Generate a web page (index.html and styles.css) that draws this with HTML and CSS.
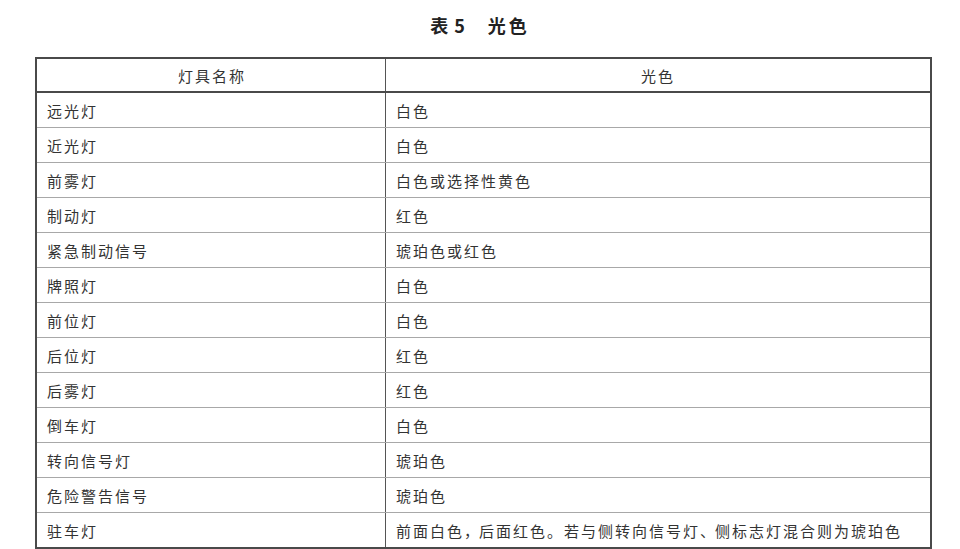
FILE: index.html
```html
<!DOCTYPE html>
<html lang="zh">
<head>
<meta charset="utf-8">
<link rel="stylesheet" href="styles.css">
</head>
<body>
<div class="title"><span class="t-num">表 5</span><span class="t-name">光色</span></div>
<div class="table">
  <div class="row head"><div class="cell c1">灯具名称</div><div class="cell c2">光色</div></div>
  <div class="row"><div class="cell c1">远光灯</div><div class="cell c2">白色</div></div>
  <div class="row"><div class="cell c1">近光灯</div><div class="cell c2">白色</div></div>
  <div class="row"><div class="cell c1">前雾灯</div><div class="cell c2">白色或选择性黄色</div></div>
  <div class="row"><div class="cell c1">制动灯</div><div class="cell c2">红色</div></div>
  <div class="row"><div class="cell c1">紧急制动信号</div><div class="cell c2">琥珀色或红色</div></div>
  <div class="row"><div class="cell c1">牌照灯</div><div class="cell c2">白色</div></div>
  <div class="row"><div class="cell c1">前位灯</div><div class="cell c2">白色</div></div>
  <div class="row"><div class="cell c1">后位灯</div><div class="cell c2">红色</div></div>
  <div class="row"><div class="cell c1">后雾灯</div><div class="cell c2">红色</div></div>
  <div class="row"><div class="cell c1">倒车灯</div><div class="cell c2">白色</div></div>
  <div class="row"><div class="cell c1">转向信号灯</div><div class="cell c2">琥珀色</div></div>
  <div class="row"><div class="cell c1">危险警告信号</div><div class="cell c2">琥珀色</div></div>
  <div class="row last"><div class="cell c1">驻车灯</div><div class="cell c2">前面白色<span class="np">，</span>后面红色。若与侧转向信号灯<span class="np">、</span>侧标志灯混合则为琥珀色</div></div>
</div>
</body>
</html>
```
FILE: styles.css
```css
html, body {
  margin: 0;
  padding: 0;
  background: #fff;
}
body {
  font-family: "Noto Sans CJK SC", "Noto Sans", sans-serif;
  color: #333;
  width: 960px;
  height: 549px;
  overflow: hidden;
}
.title {
  height: 57px;
  display: flex;
  justify-content: center;
  align-items: center;
  padding-bottom: 8px;
  box-sizing: border-box;
  font-size: 18px;
  font-weight: bold;
  color: #222;
  letter-spacing: 1px;
}
.t-num {
  margin-right: 22px;
}
.t-name {
  letter-spacing: 3px;
}
.table {
  margin-left: 35px;
  width: 897px;
  box-sizing: border-box;
  border: 2px solid #4a4a4a;
}
.row {
  display: grid;
  grid-template-columns: 349px 1fr;
  height: 35px;
  box-sizing: border-box;
  border-bottom: 1px solid #a8a8a8;
}
.row.head {
  height: 34px;
  border-bottom: 2px solid #4a4a4a;
}
.row.last {
  border-bottom: none;
  height: 34px;
}
.cell {
  display: flex;
  align-items: center;
  padding-left: 10px;
  font-size: 15px;
  letter-spacing: 2px;
  white-space: nowrap;
}
.c1 {
  border-right: 1px solid #555;
}
.head .cell {
  justify-content: center;
  padding-left: 0;
}
.head .c1 {
  padding-left: 2px;
}
.np {
  letter-spacing: -7px;
  margin-right: 7px;
}
```
